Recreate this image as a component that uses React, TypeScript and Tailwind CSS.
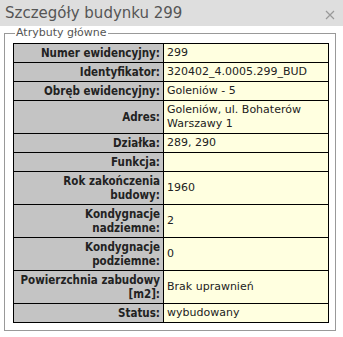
const rows: [string[], string][] = [
  [["Numer ewidencyjny:"], "299"],
  [["Identyfikator:"], "320402_4.0005.299_BUD"],
  [["Obręb ewidencyjny:"], "Goleniów - 5"],
  [["Adres:"], "Goleniów, ul. Bohaterów Warszawy 1"],
  [["Działka:"], "289, 290"],
  [["Funkcja:"], ""],
  [["Rok zakończenia", "budowy:"], "1960"],
  [["Kondygnacje", "nadziemne:"], "2"],
  [["Kondygnacje", "podziemne:"], "0"],
  [["Powierzchnia zabudowy", "[m2]:"], "Brak uprawnień"],
  [["Status:"], "wybudowany"],
];

export default function App() {
  return (
    <div
      className="flex h-[337px] w-[343px] flex-col bg-white text-[#333]"
      style={{ fontFamily: '"DejaVu Sans", sans-serif' }}
    >
      {/* title bar */}
      <div className="flex h-[26px] items-center justify-between bg-[#dedede] pr-[8px] pl-[5px]">
        <span className="text-[15px] text-[#555]">Szczegóły budynku 299</span>
        <svg width="10" height="10" viewBox="0 0 10 10" className="mt-[4px]">
          <path d="M1 1L9 9M9 1L1 9" stroke="#999" strokeWidth="1.2" />
        </svg>
      </div>

      <div className="flex-1 px-[4px] pt-[1px]">
        <fieldset className="w-[332px] border border-[#999] pr-[6px] pb-[7px] pl-[8px]">
          <legend className="ml-[2px] px-[1px] text-[11px] leading-[12px] text-[#555]">
            Atrybuty główne
          </legend>
          <table className="mt-[4px] w-[316px] table-fixed border-collapse border border-black text-[11px] leading-[14px]">
            <colgroup>
              <col className="w-[150px]" />
              <col />
            </colgroup>
            <tbody>
              {rows.map(([label, value]) => (
                <tr key={label[0]}>
                  <th
                    className="border border-black bg-[#c4c4c4] px-[3px] py-[2px] text-right align-middle text-[11.5px] font-bold text-[#222]"
                    style={{ fontFamily: '"DejaVu Sans Condensed", "DejaVu Sans", sans-serif' }}
                  >
                    {label.map((l, i) => (
                      <div key={i}>{l}</div>
                    ))}
                  </th>
                  <td className="border border-black bg-[#ffffe0] px-[3px] py-[2px] text-left align-middle text-[#222]">
                    {value}
                  </td>
                </tr>
              ))}
            </tbody>
          </table>
        </fieldset>
      </div>
    </div>
  );
}
